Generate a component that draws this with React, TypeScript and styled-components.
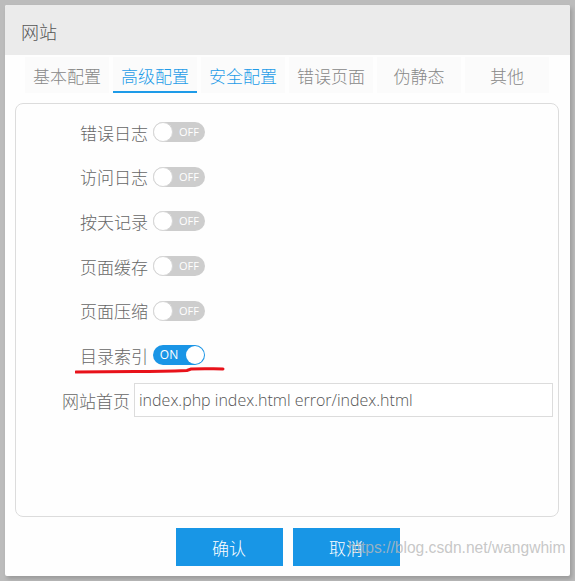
import React from 'react';
import styled, { createGlobalStyle } from 'styled-components';

const GlobalStyle = createGlobalStyle`
  html, body {
    margin: 0;
    padding: 0;
    background: #bcbcbc;
  }
  body {
    width: 575px;
    height: 581px;
    overflow: hidden;
    font-family: "Noto Sans CJK SC", "Open Sans", sans-serif;
    font-weight: 300;
  }
`;

const Dialog = styled.div`
  position: relative;
  margin: 5px 0 0 5px;
  width: 565px;
  height: 571px;
  background: #fefefe;
  border-radius: 2px;
  box-shadow: 2px 3px 4px rgba(0, 0, 0, 0.18);
  display: flex;
  flex-direction: column;
  overflow: hidden;
`;

const Header = styled.div`
  height: 50px;
  background: #ebebeb;
  display: flex;
  align-items: center;
  padding: 2px 0 0 16px;
  box-sizing: border-box;
  font-size: 18px;
  color: #555;
`;

const Tabs = styled.div`
  display: flex;
  gap: 4px;
  margin-top: 2px;
  padding-left: 20px;
  height: 36px;
`;

const Tab = styled.div<{ $active?: boolean; $blue?: boolean }>`
  width: 84px;
  height: 36px;
  box-sizing: border-box;
  display: flex;
  align-items: center;
  justify-content: center;
  font-size: 17px;
  background: #fbfbfb;
  color: ${p => (p.$active || p.$blue ? '#1e9be8' : '#888')};
  border-bottom: 2px solid ${p => (p.$active ? '#1e9be8' : 'transparent')};
  padding-top: 2px;
`;

const Panel = styled.div`
  margin: 10px 11px 0 10px;
  height: 414px;
  box-sizing: border-box;
  border: 1px solid #dcdcdc;
  border-radius: 8px;
  padding-top: 6px;
  display: flex;
  flex-direction: column;
`;

const Row = styled.div`
  position: relative;
  display: flex;
  align-items: center;
  gap: 5px;
  height: 44.6px;
`;

const Label = styled.div<{ $width: number }>`
  width: ${p => p.$width}px;
  text-align: right;
  font-size: 17px;
  color: #666;
  flex-shrink: 0;
`;

const Switch = styled.div<{ $on?: boolean }>`
  width: 52px;
  height: 20px;
  border-radius: 10px;
  background: ${p => (p.$on ? '#1a95e6' : '#cdcdcd')};
  display: flex;
  flex-direction: ${p => (p.$on ? 'row-reverse' : 'row')};
  align-items: center;
  font-family: "Open Sans", sans-serif;
  font-weight: 400;
  font-size: ${p => (p.$on ? '12px' : '11px')};
  color: #fff;
`;

const Knob = styled.div<{ $on?: boolean }>`
  width: ${p => (p.$on ? '18px' : '20px')};
  height: ${p => (p.$on ? '18px' : '20px')};
  margin: ${p => (p.$on ? '0 1px' : '0')};
  box-sizing: border-box;
  border-radius: 50%;
  background: #fff;
  border: ${p => (p.$on ? 'none' : '1px solid #d6d6d6')};
  flex-shrink: 0;
`;

const SwitchText = styled.span`
  flex: 1;
  text-align: center;
  line-height: 20px;
`;

const Scribble = styled.svg`
  position: absolute;
  left: 59px;
  top: 33px;
  pointer-events: none;
`;

const InputRow = styled.div`
  display: flex;
  align-items: center;
  gap: 4px;
  margin-top: 5.5px;
`;

const TextInput = styled.div`
  width: 419px;
  height: 34px;
  box-sizing: border-box;
  border: 1px solid #dcdcdc;
  display: flex;
  align-items: center;
  padding-left: 4px;
  font-family: "Open Sans", sans-serif;
  font-weight: 300;
  font-size: 16px;
  color: #555;
  background: #fff;
`;

const Footer = styled.div`
  display: flex;
  justify-content: center;
  gap: 10px;
  margin-top: 11px;
`;

const Button = styled.div`
  width: 107px;
  height: 38px;
  background: #1896e6;
  color: #fff;
  font-size: 17px;
  display: flex;
  align-items: center;
  justify-content: center;
`;

const Watermark = styled.div`
  position: absolute;
  left: 343px;
  top: 534px;
  font-family: "Liberation Sans", Arial, sans-serif;
  font-weight: 400;
  font-size: 15.6px;
  color: rgba(185, 185, 185, 0.8);
  pointer-events: none;
`;

const tabs = ['基本配置', '高级配置', '安全配置', '错误页面', '伪静态', '其他'];

const switches = [
  { label: '错误日志', on: false },
  { label: '访问日志', on: false },
  { label: '按天记录', on: false },
  { label: '页面缓存', on: false },
  { label: '页面压缩', on: false },
  { label: '目录索引', on: true },
];

const App = () => {
  return (
    <>
      <GlobalStyle />
      <Dialog>
        <Header>网站</Header>
        <Tabs>
          {tabs.map((t, i) => (
            <Tab key={t} $active={i === 1} $blue={i === 2}>{t}</Tab>
          ))}
        </Tabs>
        <Panel>
          {switches.map(s => (
            <Row key={s.label}>
              <Label $width={132}>{s.label}</Label>
              <Switch $on={s.on}>
                <Knob $on={s.on} />
                <SwitchText>{s.on ? 'ON' : 'OFF'}</SwitchText>
              </Switch>
              {s.on && (
                <Scribble width="152" height="10" viewBox="0 0 152 10">
                  <path
                    d="M1 6 C 20 6, 40 5.5, 60 5.5 S 100 5, 112 4.5 L 116 3 C 130 3, 140 2.5, 148 3"
                    fill="none"
                    stroke="#e8121a"
                    strokeWidth="3"
                    strokeLinecap="round"
                  />
                </Scribble>
              )}
            </Row>
          ))}
          <InputRow>
            <Label $width={114}>网站首页</Label>
            <TextInput>index.php index.html error/index.html</TextInput>
          </InputRow>
        </Panel>
        <Footer>
          <Button>确认</Button>
          <Button>取消</Button>
        </Footer>
        <Watermark>https://blog.csdn.net/wangwhim</Watermark>
      </Dialog>
    </>
  );
};

export default App;
